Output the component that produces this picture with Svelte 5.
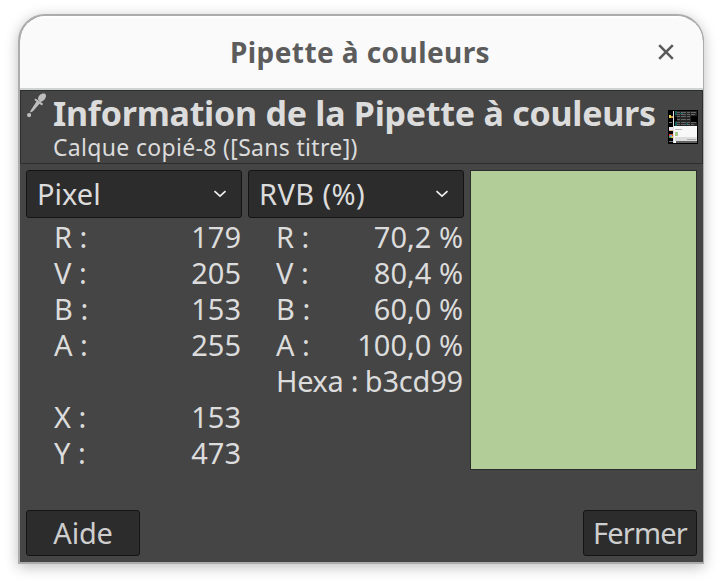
<script>
  const pixelRows = [
    ['R :', '179'],
    ['V :', '205'],
    ['B :', '153'],
    ['A :', '255'],
    ['', ''],
    ['X :', '153'],
    ['Y :', '473'],
  ];
  const rgbRows = [
    ['R :', '70,2 %'],
    ['V :', '80,4 %'],
    ['B :', '60,0 %'],
    ['A :', '100,0 %'],
    ['Hexa :', 'b3cd99'],
  ];
  const panels = [
    { name: 'Pixel', rows: pixelRows, cls: 'pixel' },
    { name: 'RVB (%)', rows: rgbRows, cls: 'rgb' },
  ];
</script>

<main>
  <div class="window">
    <header>
      <h1>Pipette à couleurs</h1>
      <button class="close" aria-label="Fermer la fenêtre">
        <svg width="18" height="18" viewBox="0 0 18 18"><path d="M2.2 2.2 15.8 15.8M15.8 2.2 2.2 15.8" stroke="#5c5c5c" stroke-width="2.6" /></svg>
      </button>
    </header>

    <section class="info">
      <svg class="dropper" width="20" height="25" viewBox="0 0 20 25">
        <g fill="#bebebe">
          <path d="M11 6.5C11 3 13.6 0.4 17.2 0.6 19.1.9 19.4 2.8 18.7 4.5 17.7 7.1 15.5 8.6 13.3 9.1Z" />
          <path d="M8.5 5.5 16.1 10.8 14.9 12.4 7.4 7.1Z" />
          <path d="M10.1 7.4 13.4 9.8 6 18.2 3.4 19.5 3.2 18.2Z" />
          <circle cx="2.1" cy="22.1" r="2.1" />
        </g>
      </svg>
      <div class="heading">
        <h2>Information de la Pipette à couleurs</h2>
        <p>Calque copié-8 ([Sans titre])</p>
      </div>
      <svg class="thumb" width="30" height="34" viewBox="0 0 30 34">
        <path fill="#000" d="M0 0h30v34H0z" />
        <path fill="#ddd" d="M5 1h1v32H5z" />
        <path fill="#f8f8f8" d="M6 16h23v17H6z" />
        <path fill="#262626" d="M7 1h22v15H7z" />
        <path fill="#10615c" d="M7 1h2v4H7zM7 12h2v4H7zM18 13h2v2h-2zM12 3h3v1h-3z" />
        <path stroke="#666" stroke-dasharray="3 1 5 1" d="M9 2.5h20M9 4.5h18M9 6.5h13M9 9.5h14M9 12.5h20M9 14.5h17" />
        <path fill="#000" d="M7 7h2v4H7zM23 6h6v6h-6z" />
        <path stroke="#bbb" d="M7 19.5h7" />
        <path fill="#dedede" d="M7 27h22v4H7z" />
        <path stroke="#aaa" d="M19 29.5h9" />
        <path fill="#a9ca88" d="M7 22h3v4H7z" />
        <path fill="#626262" d="M8 31h21v2H8z" />
        <path fill="#ead04d" d="M1 5h2v3H1z" /><path fill="#c5943a" d="M3 6h2v2H3z" />
        <path fill="#777" d="M1 12h3v1H1z" />
        <path fill="#e8e8ee" d="M1 17h4v4H1z" /><path fill="#e6b8a6" d="M1 20h4v1H1z" />
        <path fill="#dc4734" d="M1 24h4v2H1z" /><path fill="#e8c33d" d="M3 26h2v2H3z" />
        <path fill="#49a257" d="M1 26h2v2H1z" /><path fill="#75a8e8" d="M2 25h2v2H2z" />
        <path fill="#777" d="M1 31h4v1H1z" />
      </svg>
    </section>

    <section class="body">
      {#each panels as panel}
        <div class="panel {panel.cls}">
          <button class="select">
            <span>{panel.name}</span>
            <svg width="14" height="8" viewBox="0 0 14 8"><path d="m1.5 1.2 5.5 5 5.5-5" fill="none" stroke="#eee" stroke-width="1.7" /></svg>
          </button>
          <dl>
            {#each panel.rows as [label, value]}
              <div class="row">
                <dt class:hexa={label === 'Hexa :'}>{label}</dt>
                <dd class:hexval={value === 'b3cd99'}>{value}</dd>
              </div>
            {/each}
          </dl>
        </div>
      {/each}
      <div class="swatch"></div>
    </section>

    <footer>
      <button class="action"><span class="aide">Aide</span></button>
      <button class="action"><span class="fermer">Fermer</span></button>
    </footer>
  </div>
</main>

<style>
  :global(body) { background: #fff; }
  main {
    box-sizing: border-box;
    width: 723px;
    height: 582px;
    padding: 14px 0 0 18px;
    overflow: hidden;
    font-family: "Noto Sans", "Open Sans", sans-serif;
    color: #dcdcdc;
  }
  .window {
    box-sizing: border-box;
    width: 686px;
    height: 550px;
    border: 2px solid #acacac;
    border-right-width: 1px;
    border-radius: 27px 27px 0 0;
    background: #454545;
    box-shadow: 0 3px 14px rgba(0, 0, 0, .26);
    overflow: hidden;
  }
  h1, h2, p, dl, dt, dd { margin: 0; white-space: nowrap; }
  button { font: inherit; color: inherit; padding: 0; margin: 0; }
  header {
    box-sizing: border-box;
    height: 74px;
    display: flex;
    align-items: center;
    justify-content: flex-end;
    padding: 0 28px 0 0;
    background: #fafafa;
    border-bottom: 2px solid #d0d4d0;
    box-shadow: inset 0 2px #fff;
  }
  h1 {
    width: 262px;
    margin-right: 165px;
    font-size: 28px;
    line-height: 74px;
    color: #5c5c5c;
    letter-spacing: 0.42px;
  }
  .close { display: flex; border: 0; background: none; }
  .info {
    box-sizing: border-box;
    height: 74px;
    display: flex;
    align-items: flex-start;
    padding: 2px 4px 0 6px;
    border: 1px solid #2e2e2e;
  }
  .dropper { flex: none; margin-right: 6px; }
  .heading { width: 615px; flex: none; }
  h2 { font-size: 34px; line-height: 40px; letter-spacing: -0.26px; }
  p { font-size: 23px; line-height: 28px; letter-spacing: 0.32px; }
  .thumb { flex: none; margin-top: 17px; }
  .body { display: flex; gap: 6px; padding: 6px 6px 0; height: 300px; }
  .panel { width: 216px; flex: none; font-size: 29px; }
  .select {
    box-sizing: border-box;
    width: 100%;
    height: 48px;
    display: flex;
    align-items: center;
    justify-content: space-between;
    padding: 0 14px 0 10px;
    background: #2c2c2c;
    border: 1px solid #141414;
    border-radius: 3px;
  }
  .select span { padding-bottom: 2px; }
  .rgb .select span { letter-spacing: 0.4px; }
  dl { padding: 1px 1px 0 28px; }
  .row { height: 36px; line-height: 36px; display: flex; justify-content: space-between; }
  .hexa { letter-spacing: -0.35px; }
  .hexval { letter-spacing: -0.2px; }
  .swatch {
    box-sizing: border-box;
    width: 227px;
    height: 300px;
    background: #b3cd99;
    border: 1px solid #2c2c2c;
  }
  footer { display: flex; justify-content: space-between; padding: 40px 6px 0; }
  .action {
    box-sizing: border-box;
    width: 114px;
    height: 46px;
    display: flex;
    align-items: center;
    justify-content: center;
    font-size: 29px;
    color: #cecece;
    background: #2c2c2c;
    border: 1px solid #141414;
    border-radius: 3px;
  }
  .action span { padding-bottom: 2px; }
  .aide { letter-spacing: -0.2px; }
  .fermer { letter-spacing: -0.8px; }
</style>
